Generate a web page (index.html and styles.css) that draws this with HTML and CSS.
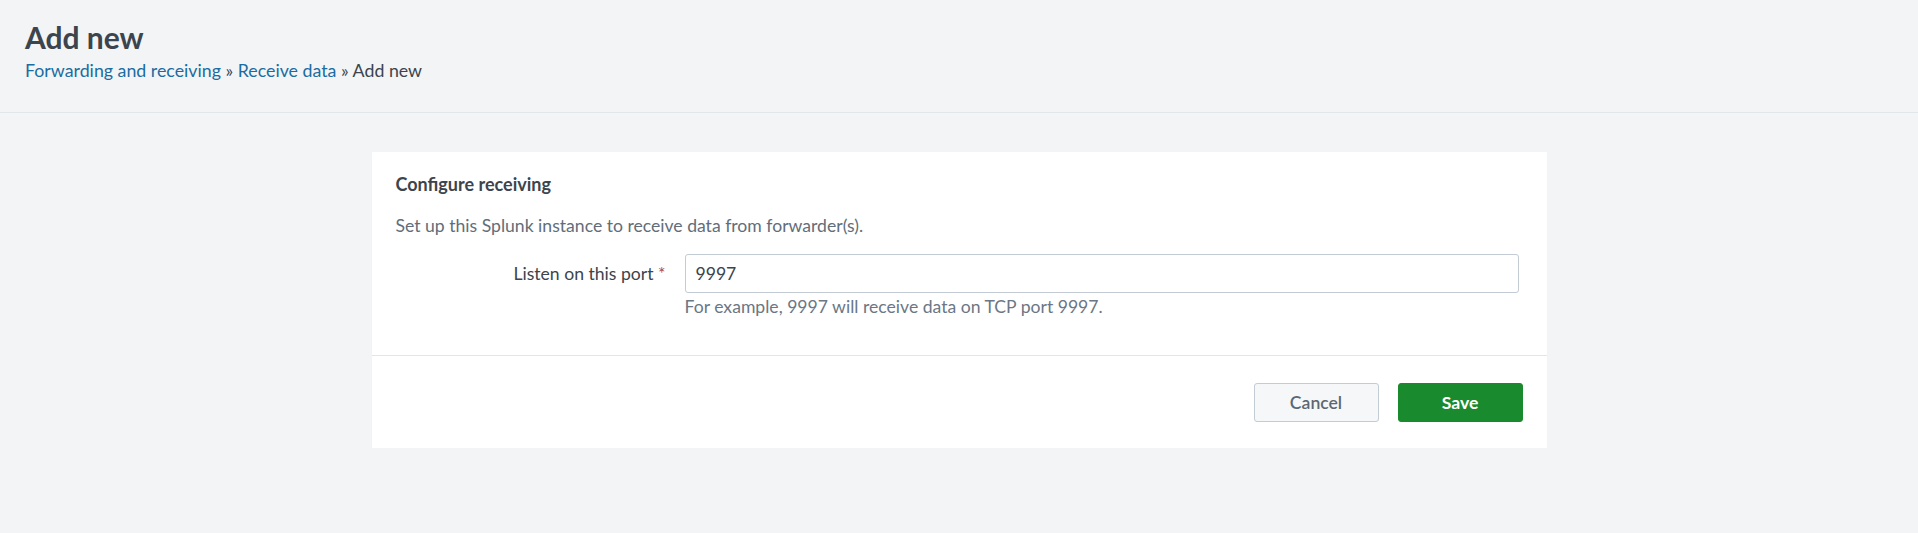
FILE: index.html
```html
<!DOCTYPE html>
<html>
<head>
<meta charset="utf-8">
<link rel="stylesheet" href="styles.css">
</head>
<body>
<header class="page-header">
  <h1 class="page-title">Add new</h1>
  <div class="breadcrumb">
    <a href="#" class="crumb-link">Forwarding and receiving</a> » <a href="#" class="crumb-link">Receive data</a> » <span>Add new</span>
  </div>
</header>
<main class="content">
  <section class="card">
    <div class="card-body">
      <h2 class="card-title">Configure receiving</h2>
      <p class="card-desc">Set up this Splunk instance to receive data from forwarder(s).</p>
      <div class="form-row">
        <label class="form-label">Listen on this port <span class="req">*</span></label>
        <div class="form-control">
          <input class="text-input" type="text" value="9997">
          <div class="help">For example, 9997 will receive data on TCP port 9997.</div>
        </div>
      </div>
    </div>
    <div class="card-footer">
      <button class="btn btn-cancel">Cancel</button>
      <button class="btn btn-save">Save</button>
    </div>
  </section>
</main>
</body>
</html>
```

FILE: styles.css
```css
* { box-sizing: border-box; }
html, body {
  margin: 0;
  padding: 0;
  background: #f2f4f5;
  font-family: Lato, "Open Sans", "Liberation Sans", sans-serif;
  color: #3c444d;
}
.page-header {
  height: 113px;
  padding: 18px 25px 0;
  border-bottom: 1px solid #e1e6eb;
}
.page-title {
  margin: 0;
  font-size: 30px;
  line-height: 38px;
  font-weight: 700;
  color: #3c444d;
}
.breadcrumb {
  margin-top: 3px;
  font-size: 17.8px;
  line-height: 22px;
  color: #3c444d;
}
.crumb-link {
  color: #1a6ca1;
  text-decoration: none;
}
.content {
  padding-top: 39px;
}
.card {
  width: 1175px;
  margin: 0 auto;
  background: #ffffff;
  box-shadow: 0 1px 1px rgba(0,0,0,0.04);
}
.card-body {
  padding: 21px 28px 37px 24px;
  border-bottom: 1px solid #e1e6eb;
}
.card-title {
  margin: 0;
  font-size: 18px;
  line-height: 22px;
  font-weight: 700;
  color: #3c444d;
}
.card-desc {
  margin: 20px 0 0;
  font-size: 17.6px;
  line-height: 22px;
  color: #626d79;
}
.form-row {
  display: flex;
  align-items: flex-start;
  margin-top: 17px;
}
.form-label {
  width: 270px;
  flex: none;
  text-align: right;
  font-size: 17.6px;
  line-height: 39px;
  color: #3c444d;
  margin-right: 19px;
}
.req { color: #b24a4a; }
.form-control { flex: 1; }
.text-input {
  display: block;
  width: 100%;
  height: 39px;
  padding: 0 10px;
  border: 1px solid #c3cbd4;
  border-radius: 3px;
  font-family: inherit;
  font-size: 17.6px;
  color: #3c444d;
  background: #fff;
  outline: none;
}
.help {
  margin-top: 3px;
  font-size: 17.6px;
  line-height: 22px;
  color: #6b7785;
}
.card-footer {
  display: flex;
  justify-content: flex-end;
  gap: 19px;
  padding: 27px 24px 26px;
}
.btn {
  width: 125px;
  height: 39px;
  border-radius: 3px;
  font-family: inherit;
  font-size: 17.6px;
  font-weight: 700;
  cursor: pointer;
}
.btn-cancel {
  background: #f5f7f8;
  border: 1px solid #c3cbd4;
  color: #5c6773;
  font-weight: 600;
}
.btn-save {
  background: #1a8a2e;
  border: 1px solid #1a8a2e;
  color: #ffffff;
}
```
